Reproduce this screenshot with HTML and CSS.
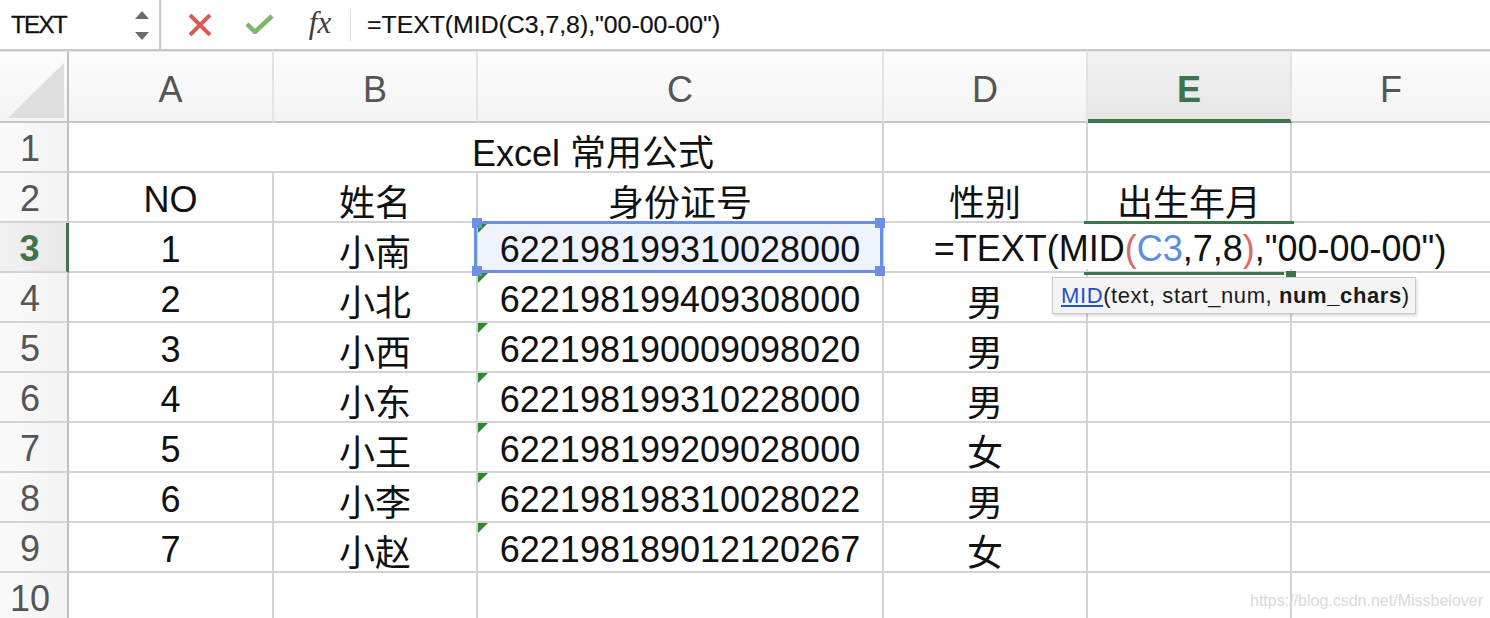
FILE: index.html
```html
<!DOCTYPE html>
<html lang="zh">
<head>
<meta charset="utf-8">
<title>Excel</title>
<link rel="stylesheet" href="styles.css">
</head>
<body>
<div class="app">
  <div class="fbar">
    <div class="namebox">
      <span class="name">TEXT</span>
      <svg class="spin" width="14" height="30" viewBox="0 0 14 30"><path d="M7 0L14 8H0Z" fill="#6a6a6a"/><path d="M0 21H14L7 29Z" fill="#6a6a6a"/></svg>
    </div>
    <div class="tools">
      <svg class="ico-x" width="24" height="22" viewBox="0 0 24 22"><path d="M2 1L22 21M22 1L2 21" stroke="#da5a57" stroke-width="4" fill="none"/></svg>
      <svg class="ico-ok" width="29" height="20" viewBox="0 0 29 20"><path d="M2 10L10 18L27 2" stroke="#7bb86a" stroke-width="4.5" fill="none"/></svg>
      <span class="fx">fx</span>
      <span class="fdiv"></span>
    </div>
    <div class="formula">=TEXT(MID(C3,7,8),"00-00-00")</div>
  </div>

  <div class="sheet">
    <div class="hc corner"><svg width="67" height="70" viewBox="0 0 67 70"><path d="M8 66L64 11V66Z" fill="#dedede"/></svg></div>
    <div class="hc">A</div>
    <div class="hc">B</div>
    <div class="hc">C</div>
    <div class="hc">D</div>
    <div class="hc active">E</div>
    <div class="hc last">F</div>

    <div class="rh">1</div>
    <div class="c merge">Excel 常用公式</div>
    <div class="c"></div>
    <div class="c"></div>
    <div class="c last"></div>

    <div class="rh">2</div>
    <div class="c">NO</div>
    <div class="c">姓名</div>
    <div class="c">身份证号</div>
    <div class="c">性别</div>
    <div class="c">出生年月</div>
    <div class="c last"></div>

    <div class="rh active">3</div>
    <div class="c">1</div>
    <div class="c">小南</div>
    <div class="c num selected"><span class="tri"></span>622198199310028000
      <div class="sel"><span class="hd tl"></span><span class="hd tr"></span><span class="hd bl"></span><span class="hd br"></span></div>
    </div>
    <div class="c"></div>
    <div class="c editing">
      <div class="edit"><span>=TEXT(MID<span class="pr">(</span><span class="rf">C3</span>,7,8<span class="pr">)</span>,"00-00-00")</span></div>
      <div class="gtop"></div>
      <div class="gbot"></div>
      <div class="ghandle"></div>
      <div class="tip"><span><span class="fn">MID</span>(text, start_num, <b>num_chars</b>)</span></div>
    </div>
    <div class="c last"></div>

    <div class="rh">4</div>
    <div class="c">2</div>
    <div class="c">小北</div>
    <div class="c num"><span class="tri"></span>622198199409308000</div>
    <div class="c">男</div>
    <div class="c"></div>
    <div class="c last"></div>

    <div class="rh">5</div>
    <div class="c">3</div>
    <div class="c">小西</div>
    <div class="c num"><span class="tri"></span>622198190009098020</div>
    <div class="c">男</div>
    <div class="c"></div>
    <div class="c last"></div>

    <div class="rh">6</div>
    <div class="c">4</div>
    <div class="c">小东</div>
    <div class="c num"><span class="tri"></span>622198199310228000</div>
    <div class="c">男</div>
    <div class="c"></div>
    <div class="c last"></div>

    <div class="rh">7</div>
    <div class="c">5</div>
    <div class="c">小王</div>
    <div class="c num"><span class="tri"></span>622198199209028000</div>
    <div class="c">女</div>
    <div class="c"></div>
    <div class="c last"></div>

    <div class="rh">8</div>
    <div class="c">6</div>
    <div class="c">小李</div>
    <div class="c num"><span class="tri"></span>622198198310028022</div>
    <div class="c">男</div>
    <div class="c"></div>
    <div class="c last"></div>

    <div class="rh">9</div>
    <div class="c">7</div>
    <div class="c">小赵</div>
    <div class="c num"><span class="tri"></span>622198189012120267</div>
    <div class="c">女</div>
    <div class="c"></div>
    <div class="c last"></div>

    <div class="rh">10</div>
    <div class="c"></div>
    <div class="c"></div>
    <div class="c"></div>
    <div class="c"></div>
    <div class="c"></div>
    <div class="c last"></div>
  </div>

  <div class="watermark">https://blog.csdn.net/Missbelover</div>
</div>
</body>
</html>
```

FILE: styles.css
```css
body {
  margin: 0;
  background: #fff;
  overflow: hidden;
  font-family: "Liberation Sans", "Noto Sans CJK SC", sans-serif;
}

.app {
  position: relative;
  width: 1490px;
  height: 618px;
  overflow: hidden;
}

/* ---------- formula bar ---------- */
.fbar {
  display: flex;
  align-items: stretch;
  height: 51px;
  box-sizing: border-box;
  border-bottom: 2px solid #c9c9c9;
  background: #fff;
}

.namebox {
  display: flex;
  align-items: center;
  width: 161px;
  box-sizing: border-box;
  padding-left: 11px;
  padding-right: 10px;
  border-right: 2px solid #cbcbcb;
  box-shadow: 1px 0 0 #ececec;
}

.name {
  font-size: 24px;
  letter-spacing: -1.6px;
  color: #111;
  -webkit-text-stroke: 0.3px #111;
}

.spin {
  margin-left: auto;
  margin-top: 2px;
}

.tools {
  display: flex;
  align-items: center;
  padding-left: 27px;
}

.ico-x {
  margin-right: 33px;
  margin-top: 1px;
}

.ico-ok {
  margin-right: 32px;
  margin-top: -1px;
}

.fx {
  width: 28px;
  margin-right: 16px;
  font-family: "Liberation Serif", serif;
  font-style: italic;
  font-size: 31px;
  color: #3c3c3c;
  text-align: center;
  margin-top: -4px;
}

.fdiv {
  width: 1px;
  height: 32px;
  background: #dcdcdc;
  margin-right: 16px;
}

.formula {
  display: flex;
  align-items: center;
  font-size: 24.8px;
  color: #111;
  white-space: nowrap;
  -webkit-text-stroke: 0.2px #111;
}

/* ---------- sheet grid ---------- */
.sheet {
  display: grid;
  grid-template-columns: 69px 205px 204px 406px 204px 204px 198px;
  grid-template-rows: 72px repeat(10, 50px);
}

.hc {
  display: flex;
  align-items: center;
  justify-content: center;
  box-sizing: border-box;
  padding-top: 6px;
  border-top: 1px solid #e6e6e6;
  border-right: 2px solid #e4e4e4;
  border-bottom: 2px solid #c6c6c6;
  background: linear-gradient(#fcfcfc, #f4f4f4);
  font-size: 36px;
  color: #555;
}

.hc.corner {
  padding: 0;
  align-items: flex-start;
  justify-content: flex-start;
  border-right: 2px solid #c0c0c0;
}

.hc.active {
  background: linear-gradient(#f1f1f1, #e7e7e7);
  border-bottom: 4px solid #3d7449;
  color: #3d7449;
  font-weight: bold;
  padding-top: 8px;
}

.hc.last,
.c.last {
  border-right: none;
}

.rh {
  display: flex;
  align-items: center;
  justify-content: center;
  box-sizing: border-box;
  padding-top: 4px;
  padding-right: 7px;
  border-right: 2px solid #c0c0c0;
  border-bottom: 2px solid #d3d3d3;
  background: linear-gradient(90deg, #fafafa, #f3f3f3);
  font-size: 36px;
  color: #555;
}

.rh.active {
  border-right: 3px solid #3d7449;
  background: linear-gradient(90deg, #f1f1f1, #e8e8e8);
  color: #3d7449;
  font-weight: bold;
}

.c {
  position: relative;
  display: flex;
  align-items: center;
  justify-content: center;
  box-sizing: border-box;
  padding-top: 5px;
  border-right: 2px solid #d3d3d3;
  border-bottom: 2px solid #d3d3d3;
  font-size: 36px;
  color: #111;
  white-space: nowrap;
}

.c.merge {
  grid-column: span 3;
  padding-left: 235px;
}

.tri {
  position: absolute;
  top: 0;
  left: 0;
  width: 0;
  height: 0;
  border-top: 10px solid #2f8a2f;
  border-right: 10px solid transparent;
}

/* selection on C3 */
.c.selected {
  background: #eef3fd;
}

.sel {
  position: absolute;
  left: -4px;
  top: -2px;
  right: -1px;
  bottom: -2px;
  border: 3px solid #6b8fe3;
  z-index: 3;
}

.hd {
  position: absolute;
  width: 10px;
  height: 10px;
  background: #6b8fe3;
}

.hd.tl { left: -5px; top: -6px; }
.hd.tr { right: -5px; top: -6px; }
.hd.bl { left: -5px; bottom: -6px; }
.hd.br { right: -5px; bottom: -6px; }

/* editing E3 */
.edit {
  position: absolute;
  left: -202px;
  right: -198px;
  top: 1px;
  bottom: 2px;
  display: flex;
  align-items: center;
  justify-content: center;
  padding-top: 5px;
  padding-left: 6px;
  box-sizing: border-box;
  background: #fff;
  z-index: 2;
  white-space: nowrap;
}

.pr { color: #e06767; }
.rf { color: #5b8ce8; }

.gtop,
.gbot,
.ghandle {
  position: absolute;
  background: #3d7449;
  z-index: 3;
}

.gtop { left: -4px; top: -2px; width: 210px; height: 3px; }
.gbot { left: -4px; top: 49px; width: 200px; height: 3px; }
.ghandle { left: 198px; top: 48px; width: 10px; height: 7px; }

.tip {
  position: absolute;
  left: -36px;
  top: 54px;
  width: 364px;
  height: 37px;
  box-sizing: border-box;
  display: flex;
  align-items: center;
  padding-left: 8px;
  background: #f4f4f4;
  border: 1px solid #cacaca;
  box-shadow: 1px 2px 3px rgba(0, 0, 0, 0.15);
  font-size: 22px;
  letter-spacing: 0.6px;
  color: #1a1a1a;
  white-space: nowrap;
  z-index: 4;
}

.tip .fn {
  color: #1f4fd6;
  text-decoration: underline;
}

.watermark {
  position: absolute;
  left: 1250px;
  top: 592px;
  font-size: 16px;
  color: #d9d9d9;
  z-index: 5;
}
```
